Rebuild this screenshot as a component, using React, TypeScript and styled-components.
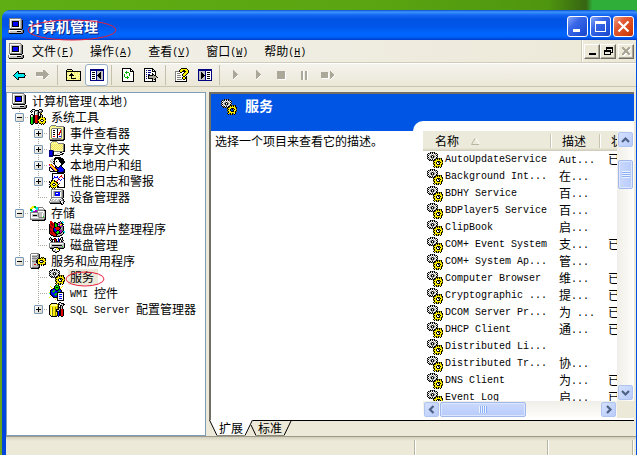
import React from "react";
import styled, { createGlobalStyle, css } from "styled-components";

const Global = createGlobalStyle`
  * { box-sizing: border-box; }
  body {
    margin: 0;
    font: 12px/16px "Noto Sans CJK SC", sans-serif;
    color: #000;
    overflow: hidden;
  }
  button { font: inherit; color: inherit; border: 0; padding: 0; margin: 0; background: none; }
`;

/* ---------- pixel icons ---------- */

const PALETTE: Record<string, string> = {
  k: "#000000", w: "#ffffff", g: "#c0c0c0", d: "#808080", y: "#ffee00", o: "#8a8000",
  b: "#0000ff", n: "#000080", r: "#e00000", m: "#800000", c: "#00e8f0", t: "#008080",
  G: "#00b000", e: "#00e000", p: "#a000c0", f: "#ffff99", F: "#f0e060", x: "#aca899",
};

const Svg = styled.svg`
  display: block;
  flex: none;
  shape-rendering: crispEdges;
`;

function Pixels({ rows }: { rows: string[] }) {
  const width = Math.max(...rows.map((r) => r.length));
  const rects: React.ReactElement[] = [];
  rows.forEach((row, y) => {
    let x = 0;
    while (x < row.length) {
      let end = x + 1;
      while (row[end] === row[x]) end++;
      if (row[x] !== ".") {
        rects.push(<rect key={`${x}-${y}`} x={x} y={y} width={end - x} height={1} fill={PALETTE[row[x]]} />);
      }
      x = end;
    }
  });
  return (
    <Svg width={width} height={rows.length} viewBox={`0 0 ${width} ${rows.length}`} aria-hidden="true">
      {rects}
    </Svg>
  );
}

const ICONS = {
  computer: [
    ".dddddddddddd...",
    ".dwwwwwwwwwwgd..",
    ".dwggggggggggdk.",
    ".dwgkkkkkkkwgdk.",
    ".dwgkbbbbbkwgdk.",
    ".dwgkbbbbbkwgdk.",
    ".dwgkbbbbbkwgdk.",
    ".dwgkbbbbbkwgdk.",
    ".dwgkkkkkkkwgdk.",
    ".dwgwwwwwwwwgdk.",
    ".dddddddddddddk.",
    "..kkkkkkkkkkkk..",
    "dwwwwwwwwwwwwgdk",
    "dwgggggggkkkkgdk",
    "dggggggggggggddk",
    ".kkkkkkkkkkkkkk.",
  ],
  gears: [
    "...kdkdk........",
    ".kdkwkwkdk......",
    "kwdwgwgwdwk.....",
    "dkwgdkdgwkd.....",
    "kwgdkwkdgwk.....",
    "dkwgkdkgwkd.....",
    "kwdwgdgwdkkokok.",
    ".kdkwkwkkykykyk.",
    "..kdkdkkoyyyyyok",
    "......kyyykkkyyk",
    "......okyk.kdkyo",
    "......kyyk..kyyk",
    "......okyykkkyko",
    ".......kyyyyyyk.",
    "......kyokykoyk.",
    ".......k.kok.k..",
  ],
  tools: [
    "..kkk....kkk....",
    ".kgwgkkkkwwdk...",
    "kgk.kgggkgddk...",
    ".k..kwwdkkdk....",
    "....kwgdk.ky....",
    ".kk.kwgdk.kk....",
    "kwgkkrrmk.kgk...",
    "kwgkkrrmkkkgk...",
    "keGkkrrmkkkykyk.",
    "keGkkrrmkkyyyyyk",
    "keGkkrrmkyykkyyk",
    "keGkkrrmyyk..kyy",
    "keGkkrrmkyykkyyk",
    "keGkkrrmkyyyyyyk",
    "keGk.kkk.kkykyk.",
    ".kk........k.k..",
  ],
  events: [
    "..ddddd.........",
    ".dffFFfdddddddd.",
    "dfffffffffffffdk",
    "dfFdddddddddFfdk",
    "dfdwwwwwkwwwdfdk",
    "dfdwkkwwkwwrdfdk",
    "dfdwwwwwkwwrdfdk",
    "dfdwkkwwkwrrdfdk",
    "dfdwwwwwkwrwdfdk",
    "dfdwkkwwkrrwdfdk",
    "dfdwwwwwkwwwdfdk",
    "dfdwrrwwkwbbdfdk",
    "dfdwwwwwkwwwdfdk",
    "dfFdddddddddFfdk",
    "ddddddddddddddkk",
    ".kkkkkkkkkkkkkk.",
  ],
  shared: [
    "...ddddd........",
    "..dfFfFfd.......",
    ".dfffffffdddddd.",
    ".dfFfFfFfFfFfFdk",
    ".dFfFfFfFfFfFfdk",
    ".dfFfFfFfFfFfFdk",
    ".dFfFfFfFfFfFfdk",
    ".dfFfFfFfFfFfFdk",
    ".dFfFfFfFfFfFfdk",
    "nnnndfffffffffdk",
    "nbbnkdddddddddkk",
    "nbbnkwwwwwwkk...",
    "nbbnkwwwgggwwkk.",
    "nbbnkwggwwwkkk..",
    "nnnnkkkkkkk.....",
    "nnnn............",
  ],
  users: [
    "......kkkkkk....",
    ".....kkkkkkkkk..",
    "..gggkkwwkkkkkk.",
    ".gwgwkwwwwkkkkk.",
    ".ggwkkwkwwkkkkkk",
    "..gggkwwwwwkkkkk",
    "...wkkwwwwwwkkk.",
    "ryr..kwwwwwwkk..",
    "pyyr..kwwwwkk...",
    ".pyyr.kkwwkbk...",
    "kkpyyrkbkkbbbk..",
    "kwkpyyrkbbbbbbk.",
    "kwwkpyyrkbbbbbbk",
    "kgwwkpyykkbbbbnk",
    ".kkkkkkkkbbbbnnk",
    "........kkkkkkkk",
  ],
  perf: [
    "...kkkkkkkkkkkk.",
    "...kwwwwwwwwwwwk",
    "...kwwwwwwwwrwwk",
    "...kwbwwbwwrrwwk",
    "...kwbbbbwrwwrwk",
    "...kbwwwwbwwwwbk",
    "...kwwwwwrbwbwwk",
    "..kkykwwrwwbwwwk",
    "k.kyykkrwwwwwwwk",
    "kkyyyyykkwwwwwwk",
    ".kyykkyykwrwwwwk",
    "kyyk..kyykwwwwwk",
    ".kyykkyykwwwwwwk",
    "kkyyyyyykkwwwwwk",
    "k.kykyk.kkkkkkkk",
    "...k.k..........",
  ],
  device: [
    "..dddddddddddd..",
    "..dwwwwwwwwwgdk.",
    "..dwgdddddddgdk.",
    "..dwgdbbbbbwgdk.",
    "..dwgdbwwbbwgdk.",
    "..dwgdbbbbbwgdk.",
    "..dwgdbbbbbwgdk.",
    "..dwgwwwwwwwgdk.",
    "..ddddddddddddk.",
    "..dwwwwwwwwwdk..",
    ".dwggwggwggdwdk.",
    ".dggwggwggdwddk.",
    "dwggggggggdkwwdk",
    "dddddddddddkwgk.",
    ".kkkkkkkkkkkkwk.",
    "............kk..",
  ],
  storage: [
    "..yyGG..........",
    ".yyyGGccddddd...",
    "yyywwcccdwwwwd..",
    "GGwwwwccdgggggd.",
    "GGcwwppdddddddkk",
    ".ccppppdwwwwwwgk",
    "ddddddddgggggwgk",
    "dwwwwwwgdgggwggk",
    "dwggggggdgggwggk",
    "dwgkkkkgdgggwggk",
    "dwggggggdgggwegk",
    "dwwwwwwwgddddddk",
    "dgggggggggggggdk",
    "ddddddddddddddkk",
    "..kkkkkkkkkkkkk.",
  ],
  defrag: [
    ".rr........k.c..",
    ".rrr.kk..kkgkcc.",
    ".rmrrkGkkgppkk..",
    "krmmrkeGkppyykk.",
    "krrmrkeekgpypk..",
    "kmrrrkGekkkppdk.",
    "kmmrrkkrrrkkddk.",
    "krmrkbrrrrrkgdk.",
    "krrrkbbrrrkdddk.",
    "kmrrkbbbkkpppdk.",
    "kmmrkkbkeekppkcc",
    "krmrrkkeeekpkgkc",
    "krrmrrkkekkkggk.",
    ".kmrrrrkkgggdk..",
    "..kkmrrkgddkk...",
    "....kkkkkkk.....",
  ],
  disk: [
    ".k..........kk..",
    "kgk..kk..b.kwk..",
    "kgkkkrrk.bkkgk..",
    ".kgk.krk.bk.kgk.",
    "..kk.krkkbk.kk..",
    ".dddddddddddddd.",
    "dwwwwwwwwwwwwwgk",
    "dwgggggggggggggk",
    "dwgkkkkkkkkkkggk",
    "dwgggggggggggegk",
    "dddddkkkkddddddk",
    ".kkkkwwyykkkkkk.",
    "...kwwdwyyk.....",
    "...kgggwwwk.....",
    "....kkggkk......",
    "......kk........",
  ],
  server: [
    ".dddddddd.......",
    "dwwwwwwgdk......",
    "dwgggggddk......",
    "dwdddddgdk......",
    "dwgggggddk.kok..",
    "dwdddddgkkkykykk",
    "dwgggggkyyyyyyyk",
    "dwggggkkyykkkyyk",
    "dwddddkkykwwdkyy",
    "dwggggkkyykkkyyk",
    "dwgggggkyyyyyyyk",
    "dwggrrgdkkykykkk",
    "dwgggggddk.k.k..",
    "dwggggggdk......",
    "dgddddddkk......",
    ".kkkkkkkk.......",
  ],
  wmi: [
    "......kGGk......",
    ".y...kGeeGk..y..",
    "..y..kGkkGk.y...",
    "...ykkGeeGky....",
    "..knbbkGGkbk....",
    ".knbGGbkkbGbk...",
    ".kbGGGbbbGGbk...",
    "ykbbGbbbkkkkkkk.",
    "ckbbbbGGkwwwwwk.",
    ".knbbGGGkwbbbwk.",
    "..knbbGbkwwwwwk.",
    ".y.knbbbkwbbbwk.",
    "y...kkkkkwwwwwk.",
    ".......ykwbbbwk.",
    "......y.kwwwwwk.",
    "........kkkkkkk.",
  ],
  sql: [
    "..........kk....",
    "..kkkkkk.kgwkkk.",
    ".kyffffyokkwggkk",
    "kyffffffyk.kkgk.",
    "kyyyyyyyok.kgk..",
    "kyfoyyoyokkkgk..",
    "kyfoyyoyokgkgk..",
    "kyfoyyokkkgkrrk.",
    "kyfoyyokgwkkrrk.",
    "kyfoyyokkbkkrrk.",
    "kyfoyyoykbkkrrk.",
    "kyfoyyoykbkkrrk.",
    "kyfoyyoykbkkrrk.",
    ".kfoyyookbkkrrk.",
    "..kkkkkk.k..kk..",
  ],
  back: [
    "....kk.......",
    "...kck.......",
    "..kcckkkkkkk.",
    ".kccccccccck.",
    "kccccccccccck",
    ".kccccccccck.",
    "..kcckkkkkkk.",
    "...kck.......",
    "....kk.......",
  ],
  forward: [
    ".......xx....",
    ".......xxx...",
    "xxxxxxxxxxx..",
    "xxxxxxxxxxxx.",
    "xxxxxxxxxxxxx",
    "xxxxxxxxxxxxw",
    ".wwwwwwxxxxw.",
    ".......xxxw..",
    ".......xxw...",
    "........w....",
  ],
  up: [
    ".kkkkk.........",
    "kfFfFfk........",
    "kkkkkkkkkkkkkkk",
    "kfFffFffFffFffk",
    "kffffkffFffFffk",
    "kFffkkkffffffFk",
    "kffkkkkkfFffffk",
    "kffffkffffffFfk",
    "kFfffkfffFffffk",
    "kffFfkkkkkfffFk",
    "kfFffffFffffFfk",
    "kkkkkkkkkkkkkkk",
  ],
  paneLeft: [
    "nnnnnnnnnnnnnn",
    "nnnnnnnnnnnnnn",
    "nwwwwwnggggggn",
    "nwkkkwngggkggn",
    "nwwwwwnggkkggn",
    "nwkkkwngkkkggn",
    "nwwwwwnkkkkggn",
    "nwkkkwngkkkggn",
    "nwwwwwnggkkggn",
    "nwkkkwngggkggn",
    "nwwwwwnggggggn",
    "nnnnnnnnnnnnnn",
  ],
  refresh: [
    "kkkkkkkkk...",
    "kwwwwwwwkk..",
    "kwwwwwwwkwk.",
    "kwwwGwwwkkkk",
    "kwwGGGGwwwwk",
    "kwwwGwwGwwwk",
    "kwGwwwwGwwwk",
    "kwGwwwwGwwwk",
    "kwGwwGwwwwwk",
    "kwwGGGGwwwwk",
    "kwwwwGwwwwwk",
    "kwwwwwwwwwwk",
    "kwwwwwwwwwwk",
    "kkkkkkkkkkkk",
  ],
  exportList: [
    "kkkkkkkkk.....",
    "kwwwwwwwkk....",
    "kwnwnnnwkwk...",
    "kwwwwwwwkkkk..",
    "kwnwnnnwwwwk..",
    "kwwwwwwwkwwk..",
    "kwnwnnwwkkwk..",
    "kwwwkkkkkxkk..",
    "kwnwkxxxxxxxk.",
    "kwwwkxxxxxxxxk",
    "kwnwkkkkkxxk..",
    "kwwwwwwwkxkk..",
    "kwwwwwwwkwwk..",
    "kkkkkkkkkkkk..",
  ],
  help: [
    "......kkkkkk..",
    ".....kyyyyyyk.",
    "....kyyykkyyyk",
    "ddddkyykkkkyyk",
    "dwwwwkkwwkyyyk",
    "dwdddwwwkyyyk.",
    "dwwwwwwkyyyk..",
    "dwddddwkyyk...",
    "dwwwwwwwkkwk..",
    "dwddddwkyykk..",
    "dwwwwwwkyykk..",
    "dwdddddwkkwk..",
    "dwwwwwwwwwwk..",
    "kkkkkkkkkkkk..",
  ],
  paneRight: [
    "nnnnnnnnnnnnnn",
    "nnnnnnnnnnnnnn",
    "nggggggnwwwwwn",
    "nggkgggnwkkkwn",
    "nggkkggnwwwwwn",
    "nggkkkgnwkkkwn",
    "nggkkkknwwwwwn",
    "nggkkkgnwkkkwn",
    "nggkkggnwwwwwn",
    "nggkgggnwkkkwn",
    "nggggggnwwwwwn",
    "nnnnnnnnnnnnnn",
  ],
  play: [
    "x.....", "xx....", "xxx...", "xxxx..", "xxxxx.", "xxxxw.", "xxxw..", "xxw...", "xw....", "w.....",
  ],
  stop: [
    "xxxxxxxx.", "xxxxxxxxw", "xxxxxxxxw", "xxxxxxxxw", "xxxxxxxxw", "xxxxxxxxw", "xxxxxxxxw", "xxxxxxxxw", ".wwwwwwww",
  ],
  pause: [
    "xxw.xxw", "xxw.xxw", "xxw.xxw", "xxw.xxw", "xxw.xxw", "xxw.xxw", "xxw.xxw", "xxw.xxw", "xxw.xxw",
  ],
  restart: [
    ".........x....",
    "xxxxxxx..xx...",
    "xxxxxxxw.xxx..",
    "xxxxxxxw.xxxx.",
    "xxxxxxxw.xxxxw",
    "xxxxxxxw.xxxw.",
    "xxxxxxxw.xxw..",
    ".wwwwwww.xw...",
    ".........w....",
  ],
  mdiMin: [".......", ".......", ".......", ".......", ".......", ".......", "kkkkkkk", "kkkkkkk"],
  mdiRestore: [
    "..kkkkkkk",
    "..kkkkkkk",
    "..k.....k",
    "kkkkkkk.k",
    "kkkkkkk.k",
    "k.....kkk",
    "k.....k..",
    "kkkkkkk..",
  ],
  mdiClose: [
    "xx....xx.",
    "xxx..xxxw",
    ".xxxxxxww",
    "..xxxxww.",
    "..xxxx...",
    ".xxxxxx..",
    "xxxwwxxx.",
    "xxww..xxw",
    ".ww....ww",
  ],
};

type IconName = keyof typeof ICONS;
const Icon = ({ name }: { name: IconName }) => <Pixels rows={ICONS[name]} />;

/* ---------- text ---------- */

const Latin = styled.span`
  font: 10px/1 "Liberation Mono", monospace;
  white-space: pre;
  vertical-align: 1px;
`;

function Text({ children }: { children: string }) {
  return (
    <>
      {children.split(/([\x20-\x7e]+)/).filter(Boolean).map((part, i) =>
        /^[\x20-\x7e]/.test(part) ? <Latin key={i}>{part}</Latin> : part
      )}
    </>
  );
}

/* ---------- window frame ---------- */

const Desktop = styled.div`
  height: 100vh;
  display: flex;
  flex-direction: column;
  padding: 10px 0 0 2px;
  background:
    linear-gradient(90deg, transparent 0 92%, #2fae3a 93% 100%) top / 100% 12px no-repeat,
    linear-gradient(90deg, #5fae14 0%, #5aa411 60%, #4f960f 86%, #376412 92%, #376412 100%) top / 100% 12px no-repeat,
    linear-gradient(#5fae14, #5aa012 60%, #6fa81c);
`;

const Frame = styled.main`
  flex: 1;
  min-height: 0;
  display: flex;
  flex-direction: column;
`;

const TitleBar = styled.header`
  position: relative;
  flex: none;
  height: 30px;
  display: flex;
  align-items: center;
  gap: 4px;
  padding: 2px 3px 0 6px;
  border-radius: 8px 3px 0 0;
  background: linear-gradient(#0a50d0 0, #3c94fc 2px, #1467f2 5px, #0053e4 9px, #0055e8 16px, #0066ff 24px, #0060f8 27px, #003ccc 30px);
`;

const Title = styled.h1`
  flex: 1;
  margin: 0;
  color: #fff;
  font-size: 14px;
  font-weight: 700;
  line-height: 20px;
  text-shadow: 1px 1px 0 #0a1f80;
`;

const Mark = styled.svg<{ $place: "title" | "row" }>`
  position: absolute;
  pointer-events: none;
  fill: none;
  stroke: #e8203c;
  ${(p) => (p.$place === "title" ? css`left: 25px; top: 9px;` : css`left: -3px; top: 2px;`)}
`;

const Captions = styled.div`
  display: flex;
  gap: 2px;
`;

const CaptionButton = styled.button<{ $close?: boolean }>`
  width: 21px;
  height: 21px;
  display: grid;
  place-items: center;
  border: 1px solid #fff;
  border-radius: 3px;
  background: ${(p) =>
    p.$close
      ? "linear-gradient(135deg, #f0a088, #e25a34 35%, #d4400e 80%, #b83008)"
      : "linear-gradient(135deg, #8aa8f8, #3a68e8 35%, #2050d8 80%, #1c44c0)"};
`;

const Client = styled.div`
  flex: 1;
  min-height: 0;
  display: flex;
  flex-direction: column;
  border-left: 4px solid #0046dc;
  border-right: 1px solid #0050e0;
  background: #ece9d8;
`;

const MenuBar = styled.nav`
  flex: none;
  height: 23px;
  display: flex;
  align-items: center;
  padding-left: 2px;
  background: linear-gradient(90deg, #f2f1ea, #ece9d8);
  border-bottom: 1px solid #d0ccb8;
`;

const MenuItem = styled.button`
  padding: 0 8px;
  line-height: 18px;
  white-space: nowrap;
`;

const MdiButtons = styled.div`
  align-self: stretch;
  display: flex;
  align-items: center;
  margin-left: auto;
  padding: 0 2px;
  border-left: 1px solid #d0ccb8;
  box-shadow: inset 1px 0 #fff;
`;

const MdiButton = styled.button<{ $apart?: boolean }>`
  width: 16px;
  height: 15px;
  display: grid;
  place-items: center;
  margin-left: ${(p) => (p.$apart ? "2px" : "0")};
  background: #ece9d8;
  border: 1px solid;
  border-color: #fff #716f64 #716f64 #fff;
  box-shadow: inset -1px -1px #aca899;
`;

const ToolBar = styled.div`
  flex: none;
  height: 24px;
  display: flex;
  align-items: center;
  padding-left: 2px;
  border-top: 1px solid #fff;
  border-bottom: 1px solid #c8c4b0;
  background: linear-gradient(#f4f3ec, #ebe8d8);
`;

const ToolButton = styled.button<{ $on?: boolean }>`
  width: 23px;
  height: 22px;
  display: grid;
  place-items: center;
  border-radius: 3px;
  ${(p) => p.$on && css`background: #fff; border: 1px solid #98b0c8;`}
`;

const Divider = styled.span`
  width: 8px;
  height: 20px;
  background: linear-gradient(#c4c0ac, #c4c0ac) 3px 0 / 1px 100% no-repeat;
`;

/* ---------- panes ---------- */

const Panes = styled.div`
  flex: 1;
  min-height: 0;
  display: grid;
  grid-template-columns: 200px minmax(0, 1fr);
  grid-template-rows: minmax(0, 1fr);
  gap: 3px;
  padding: 5px 2px 0 0;
`;

const Tree = styled.nav`
  padding-left: 3px;
  background: #fff;
  border: 1px solid #7f9db9;
  overflow: hidden;
`;

const TreeRow = styled.div`
  height: 16px;
  display: flex;
  align-items: center;
  gap: 3px;
  white-space: nowrap;
`;

const Guides = styled.div`
  display: flex;
  align-self: stretch;
  margin-right: -2px;
`;

const dotsV = "repeating-linear-gradient(#b0ac9c 0 1px, transparent 1px 2px)";
const dotsH = "repeating-linear-gradient(90deg, #b0ac9c 0 1px, transparent 1px 2px)";

type GuideKind = "blank" | "line" | "tee" | "elbow";
const Guide = styled.span<{ $kind: GuideKind }>`
  width: 19px;
  display: grid;
  place-items: center;
  ${(p) => {
    const v = (h: string) => `${dotsV} 9px 0 / 1px ${h} no-repeat`;
    const h = `${dotsH} 9px 8px / 10px 1px no-repeat`;
    if (p.$kind === "line") return css`background: ${v("16px")};`;
    if (p.$kind === "tee") return css`background: ${v("16px")}, ${h};`;
    if (p.$kind === "elbow") return css`background: ${v("8px")}, ${h};`;
    return "";
  }}
`;

const Expander = styled.button`
  width: 9px;
  height: 9px;
  display: grid;
  place-items: center;
  border: 1px solid #7898b5;
  border-radius: 1px;
  background: linear-gradient(135deg, #fff, #d8d4c4);
`;

const Label = styled.a<{ $selected?: boolean }>`
  position: relative;
  padding: 0 4px 0 2px;
  color: inherit;
  text-decoration: none;
  line-height: 16px;
  background: ${(p) => (p.$selected ? "#ece9d8" : "none")};
`;

const Detail = styled.section`
  min-width: 0;
  display: flex;
  flex-direction: column;
`;

const View = styled.div`
  flex: 1;
  min-height: 0;
  display: grid;
  grid-template-columns: 202px minmax(0, 1fr);
  grid-template-rows: minmax(0, 1fr);
  padding-bottom: 2px;
  border-top: 2px solid #716f64;
  border-left: 2px solid #716f64;
  background: linear-gradient(#0055e5 37px, #fff 37px);
`;

const Summary = styled.div`
  display: flex;
  flex-direction: column;
`;

const Heading = styled.h2`
  height: 37px;
  display: flex;
  align-items: flex-start;
  gap: 8px;
  margin: 0;
  padding: 5px 10px 0;
  color: #fff;
  font-size: 14px;
  font-weight: 700;
  line-height: 12px;
`;

const Hint = styled.p`
  margin: 2px 0 0;
  padding-left: 4px;
  line-height: 16px;
  white-space: nowrap;
`;

const Sheet = styled.div`
  min-height: 0;
  display: grid;
  grid-template-columns: minmax(0, 1fr) 17px;
  grid-template-rows: minmax(0, 1fr) 17px;
  margin-top: 27px;
  padding: 10px 0 0 10px;
  border-top-left-radius: 10px;
  background: #fff;
`;

const ListArea = styled.div`
  overflow: hidden;
`;

const Table = styled.table`
  width: 258px;
  table-layout: fixed;
  border-collapse: collapse;
`;

const Th = styled.th<{ $width: number }>`
  width: ${(p) => p.$width}px;
  height: 20px;
  padding: 0 0 0 10px;
  text-align: left;
  font-weight: 400;
  background:
    linear-gradient(#c8c4b0, #c8c4b0) right 1px top 3px / 1px 14px no-repeat,
    linear-gradient(#fff, #fff) right 0 top 3px / 1px 14px no-repeat,
    linear-gradient(#ebeadb 17px, #d8d4c2 19px, #cbc7b8);
`;

const HeadCell = styled.span`
  display: flex;
  align-items: center;
  gap: 12px;
  padding-left: 2px;
`;

const Td = styled.td`
  height: 17px;
  padding: 0 0 0 7px;
  line-height: 15px;
  vertical-align: top;
  white-space: nowrap;

  &:first-child { vertical-align: bottom; }
`;

const NameCell = styled.span`
  display: flex;
  align-items: center;
  gap: 2px;
  margin-left: -3px;
`;

const Bar = styled.div<{ $dir: "v" | "h" }>`
  display: flex;
  flex-direction: ${(p) => (p.$dir === "v" ? "column" : "row")};
  padding: 1px;
  background: linear-gradient(${(p) => (p.$dir === "v" ? "90deg" : "180deg")}, #f0eee8, #fefefb);
`;

const ArrowButton = styled.button`
  flex: none;
  width: 15px;
  height: 15px;
  display: grid;
  place-items: center;
  border: 1px solid #b0c4f0;
  border-radius: 2px;
  background: linear-gradient(135deg, #d4e0fe, #b8ccfa);
`;

const Track = styled.div<{ $dir: "v" | "h" }>`
  flex: 1;
  display: flex;
  flex-direction: ${(p) => (p.$dir === "v" ? "column" : "row")};
  padding: ${(p) => (p.$dir === "v" ? "13px 0 0" : "0 0 0 1px")};
`;

const Thumb = styled.div<{ $dir: "v" | "h" }>`
  ${(p) => (p.$dir === "v" ? css`width: 15px; height: 29px;` : css`width: 86px; height: 15px;`)}
  display: grid;
  place-items: center;
  border: 1px solid #a0b8ec;
  border-radius: 2px;
  box-shadow: inset 0 0 0 1px #dce6fe;
  background: linear-gradient(${(p) => (p.$dir === "v" ? "90deg" : "180deg")}, #cad8fe, #b8ccfa);
`;

const Grip = styled.span<{ $dir: "v" | "h" }>`
  width: 8px;
  height: 7px;
  background: repeating-linear-gradient(
    ${(p) => (p.$dir === "v" ? "180deg" : "90deg")}, #eef4fe 0 1px, #8cb0f8 1px 2px);
`;

const Corner = styled.div`
  background: #ece9d8;
`;

const Tabs = styled.div`
  flex: none;
  height: 16px;
  display: flex;
  border-top: 1px solid #000;
`;

const Tab = styled.button<{ $active?: boolean }>`
  position: relative;
  z-index: ${(p) => (p.$active ? 1 : 0)};
  display: flex;
  margin-top: -1px;
  margin-right: -5px;
  height: 16px;
  line-height: 15px;
  --face: ${(p) => (p.$active ? "#fff" : "#ece9d8")};
  --top: ${(p) => (p.$active ? "#fff" : "#000")};
`;

const TabText = styled.span`
  padding: 0 2px;
  background: linear-gradient(var(--top) 1px, var(--face) 1px);
  border-bottom: 1px solid #8c897a;
`;

const Slant = styled.svg`
  display: block;
  fill: var(--face);
`;

const StatusBar = styled.footer`
  flex: none;
  height: 19px;
  display: grid;
  grid-template-columns: minmax(0, 1fr) 132px 84px;
  gap: 1px;
  padding: 3px 3px 0 0;
  border-top: 1px solid #9d9a8b;
  background: linear-gradient(#d4d0be, #ece9d8 4px);
`;

const StatusCell = styled.span`
  border-right: 1px solid #b8b4a2;
  box-shadow: 1px 0 #fff;
`;

/* ---------- data ---------- */

interface Node {
  label: string;
  icon: IconName;
  guides: GuideKind[];
  open?: boolean;
  selected?: boolean;
}

const TREE: Node[] = [
  { label: "计算机管理(本地)", icon: "computer", guides: [] },
  { label: "系统工具", icon: "tools", guides: ["tee"], open: true },
  { label: "事件查看器", icon: "events", guides: ["line", "tee"], open: false },
  { label: "共享文件夹", icon: "shared", guides: ["line", "tee"], open: false },
  { label: "本地用户和组", icon: "users", guides: ["line", "tee"], open: false },
  { label: "性能日志和警报", icon: "perf", guides: ["line", "tee"], open: false },
  { label: "设备管理器", icon: "device", guides: ["line", "elbow"] },
  { label: "存储", icon: "storage", guides: ["tee"], open: true },
  { label: "磁盘碎片整理程序", icon: "defrag", guides: ["line", "tee"] },
  { label: "磁盘管理", icon: "disk", guides: ["line", "elbow"] },
  { label: "服务和应用程序", icon: "server", guides: ["elbow"], open: true },
  { label: "服务", icon: "gears", guides: ["blank", "tee"], selected: true },
  { label: "WMI 控件", icon: "wmi", guides: ["blank", "tee"] },
  { label: "SQL Server 配置管理器", icon: "sql", guides: ["blank", "elbow"], open: false },
];

const SERVICES: [string, string, boolean][] = [
  ["AutoUpdateService", "Aut...", true],
  ["Background Int...", "在...", false],
  ["BDHY Service", "百...", false],
  ["BDPlayer5 Service", "百...", false],
  ["ClipBook", "启...", false],
  ["COM+ Event System", "支...", true],
  ["COM+ System Ap...", "管...", false],
  ["Computer Browser", "维...", true],
  ["Cryptographic ...", "提...", true],
  ["DCOM Server Pr...", "为 ...", true],
  ["DHCP Client", "通...", true],
  ["Distributed Li...", "", false],
  ["Distributed Tr...", "协...", false],
  ["DNS Client", "为...", true],
  ["Event Log", "启...", true],
];

const MENUS: [string, string][] = [["文件", "F"], ["操作", "A"], ["查看", "V"], ["窗口", "W"], ["帮助", "H"]];

const TOOLS: (null | { icon: IconName; name: string; on?: boolean })[] = [
  { icon: "back", name: "后退" },
  { icon: "forward", name: "前进" },
  null,
  { icon: "up", name: "向上" },
  { icon: "paneLeft", name: "显示/隐藏控制台树", on: true },
  null,
  { icon: "refresh", name: "刷新" },
  { icon: "exportList", name: "导出列表" },
  null,
  { icon: "help", name: "帮助" },
  { icon: "paneRight", name: "操作窗格" },
  null,
  { icon: "play", name: "启动服务" },
  { icon: "play", name: "继续服务" },
  { icon: "stop", name: "停止服务" },
  { icon: "pause", name: "暂停服务" },
  { icon: "restart", name: "重新启动服务" },
];

const CHEVRONS = {
  up: "M1 7 L4.5 3.5 L8 7",
  down: "M1 3 L4.5 6.5 L8 3",
  left: "M6.5 1 L3 4.5 L6.5 8",
  right: "M3 1 L6.5 4.5 L3 8",
};

function Arrow({ dir, name }: { dir: keyof typeof CHEVRONS; name: string }) {
  return (
    <ArrowButton aria-label={name}>
      <svg width="9" height="9" viewBox="0 0 9 9" aria-hidden="true">
        <path d={CHEVRONS[dir]} fill="none" stroke="#4d6185" strokeWidth="2.2" />
      </svg>
    </ArrowButton>
  );
}

function SheetTab({ label, active }: { label: string; active?: boolean }) {
  return (
    <Tab $active={active} role="tab" aria-selected={!!active}>
      <Slant width="8" height="16" viewBox="0 0 8 16" aria-hidden="true">
        <path d="M0 0 H8 V16 Z" />
        <path d="M0 0.5 H8" stroke="var(--top)" />
        <path d={active ? "M0.5 0 L8 15.5" : "M3 5 L8 15.5"} stroke="#000" />
      </Slant>
      <TabText>{label}</TabText>
      <Slant width="8" height="16" viewBox="0 0 8 16" aria-hidden="true">
        <path d="M0 0 H8 L0 16 Z" />
        <path d="M0 0.5 H8" stroke="var(--top)" />
        <path d="M7.5 0 L0 15.5" stroke="#000" />
      </Slant>
    </Tab>
  );
}

export default function App() {
  return (
    <Desktop>
      <Global />
      <Frame>
        <TitleBar>
          <Icon name="computer" />
          <Title>计算机管理</Title>
          <Mark $place="title" width="90" height="22" viewBox="0 0 90 22" aria-hidden="true">
            <ellipse cx="45" cy="11" rx="44" ry="10" />
          </Mark>
          <Captions>
            <CaptionButton aria-label="最小化">
              <svg width="13" height="13" viewBox="0 0 13 13"><path d="M2 9h7v3H2z" fill="#fff" /></svg>
            </CaptionButton>
            <CaptionButton aria-label="最大化">
              <svg width="13" height="13" viewBox="0 0 13 13">
                <path d="M1 1h11v11H1zM2 4v7h9V4z" fill="#fff" fillRule="evenodd" />
              </svg>
            </CaptionButton>
            <CaptionButton aria-label="关闭" $close>
              <svg width="13" height="13" viewBox="0 0 13 13">
                <path d="M1.5 1.5 L11.5 11.5 M11.5 1.5 L1.5 11.5" stroke="#fff" strokeWidth="2.2" />
              </svg>
            </CaptionButton>
          </Captions>
        </TitleBar>
        <Client>
          <MenuBar>
            <Icon name="computer" />
            {MENUS.map(([label, key]) => (
              <MenuItem key={key}>
                {label}<Latin>(<u>{key}</u>)</Latin>
              </MenuItem>
            ))}
            <MdiButtons>
              <MdiButton aria-label="最小化子窗口"><Icon name="mdiMin" /></MdiButton>
              <MdiButton aria-label="还原子窗口"><Icon name="mdiRestore" /></MdiButton>
              <MdiButton aria-label="关闭子窗口" $apart><Icon name="mdiClose" /></MdiButton>
            </MdiButtons>
          </MenuBar>
          <ToolBar>
            {TOOLS.map((tool, i) =>
              tool ? (
                <ToolButton key={i} aria-label={tool.name} $on={tool.on}><Icon name={tool.icon} /></ToolButton>
              ) : (
                <Divider key={i} />
              )
            )}
          </ToolBar>
          <Panes>
            <Tree>
              {TREE.map((node) => (
                <TreeRow key={node.label}>
                  <Guides>
                    {node.guides.map((kind, i) => (
                      <Guide key={i} $kind={kind}>
                        {i === node.guides.length - 1 && node.open !== undefined && (
                          <Expander aria-label={node.open ? "折叠" : "展开"}>
                            <Svg width="5" height="5" viewBox="0 0 5 5">
                              <path d={node.open ? "M0 2h5v1H0z" : "M0 2h5v1H0zM2 0h1v5H2z"} />
                            </Svg>
                          </Expander>
                        )}
                      </Guide>
                    ))}
                  </Guides>
                  <Icon name={node.icon} />
                  <Label href="#" $selected={node.selected}>
                    <Text>{node.label}</Text>
                    {node.selected && (
                      <Mark $place="row" width="40" height="16" viewBox="0 0 40 16" aria-hidden="true">
                        <ellipse cx="20" cy="8" rx="19" ry="7" />
                      </Mark>
                    )}
                  </Label>
                </TreeRow>
              ))}
            </Tree>
            <Detail>
              <View>
                <Summary>
                  <Heading><Icon name="gears" />服务</Heading>
                  <Hint>选择一个项目来查看它的描述。</Hint>
                </Summary>
                <Sheet>
                  <ListArea>
                    <Table>
                      <thead>
                        <tr>
                          <Th $width={129}>
                            <HeadCell>
                              名称
                              <svg width="9" height="8" viewBox="0 0 9 8" aria-hidden="true">
                                <path d="M4.5 0.5 L0.5 7.5 H8.5" fill="none" stroke="#b8b4a2" />
                                <path d="M4.5 0.5 L8.5 7.5" stroke="#fff" />
                              </svg>
                            </HeadCell>
                          </Th>
                          <Th $width={49}>描述</Th>
                          <Th $width={80}>状态</Th>
                        </tr>
                      </thead>
                      <tbody>
                        {SERVICES.map(([name, description, started]) => (
                          <tr key={name}>
                            <Td><NameCell><Icon name="gears" /><Latin>{name}</Latin></NameCell></Td>
                            <Td><Text>{description}</Text></Td>
                            <Td>{started ? "已启动" : ""}</Td>
                          </tr>
                        ))}
                      </tbody>
                    </Table>
                  </ListArea>
                  <Bar $dir="v">
                    <Arrow dir="up" name="向上滚动" />
                    <Track $dir="v"><Thumb $dir="v"><Grip $dir="v" /></Thumb></Track>
                    <Arrow dir="down" name="向下滚动" />
                  </Bar>
                  <Bar $dir="h">
                    <Arrow dir="left" name="向左滚动" />
                    <Track $dir="h"><Thumb $dir="h"><Grip $dir="h" /></Thumb></Track>
                    <Arrow dir="right" name="向右滚动" />
                  </Bar>
                  <Corner />
                </Sheet>
              </View>
              <Tabs role="tablist">
                <SheetTab label="扩展" active />
                <SheetTab label="标准" />
              </Tabs>
            </Detail>
          </Panes>
          <StatusBar>
            <StatusCell />
            <StatusCell />
            <StatusCell />
          </StatusBar>
        </Client>
      </Frame>
    </Desktop>
  );
}
